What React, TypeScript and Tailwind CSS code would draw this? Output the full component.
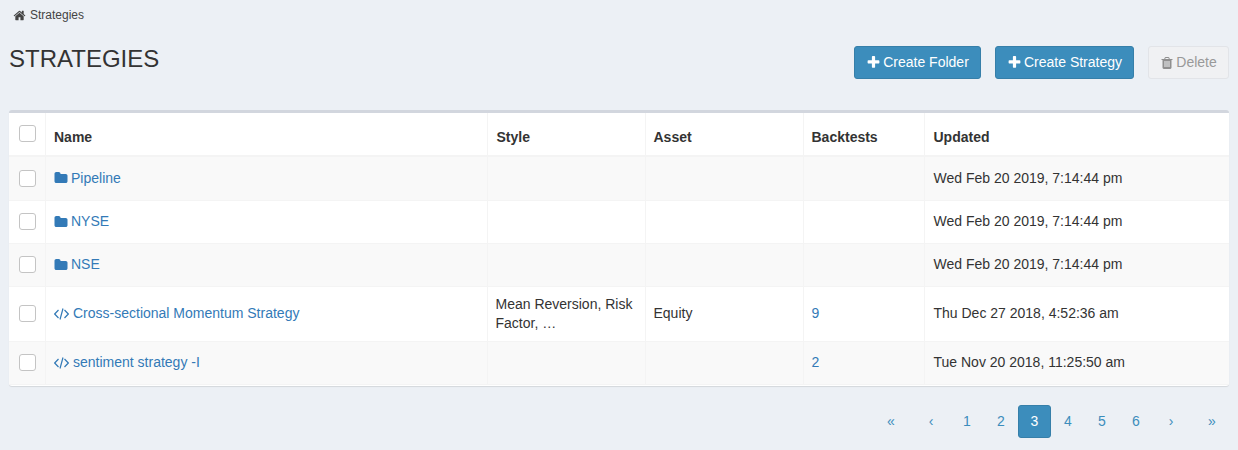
import React from 'react';

const rows = [
  { kind: 'folder', name: 'Pipeline', style: '', asset: '', backtests: '', updated: 'Wed Feb 20 2019, 7:14:44 pm', h: 'h-[44px]' },
  { kind: 'folder', name: 'NYSE', style: '', asset: '', backtests: '', updated: 'Wed Feb 20 2019, 7:14:44 pm', h: 'h-[43px]' },
  { kind: 'folder', name: 'NSE', style: '', asset: '', backtests: '', updated: 'Wed Feb 20 2019, 7:14:44 pm', h: 'h-[43px]' },
  { kind: 'code', name: 'Cross-sectional Momentum Strategy', style: 'Mean Reversion, Risk Factor, …', asset: 'Equity', backtests: '9', updated: 'Thu Dec 27 2018, 4:52:36 am', h: 'h-[55px]' },
  { kind: 'code', name: 'sentiment strategy -I', style: '', asset: '', backtests: '2', updated: 'Tue Nov 20 2018, 11:25:50 am', h: 'h-[43px]' },
];

const pages = [
  { label: '«', w: 'w-[42px]' },
  { label: '‹', w: 'w-[38px]' },
  { label: '1', w: 'w-[34px]' },
  { label: '2', w: 'w-[34px]' },
  { label: '3', w: 'w-[33px]' },
  { label: '4', w: 'w-[34px]' },
  { label: '5', w: 'w-[34px]' },
  { label: '6', w: 'w-[34px]' },
  { label: '›', w: 'w-[36px]' },
  { label: '»', w: 'w-[46px]' },
];

const Glyph = ({ d, className }: { d: string; className: string }) => (
  <svg viewBox="0 0 1792 1792" fill="currentColor" className={className}>
    <path d={d} />
  </svg>
);

const HOME = 'M1472 992v480q0 26-19 45t-45 19h-384v-384h-256v384h-384q-26 0-45-19t-19-45v-480q0-1 .5-3t.5-3l575-474 575 474q1 2 1 6zm223-69l-62 74q-8 9-21 11h-3q-13 0-21-7l-692-577-692 577q-12 8-24 7-13-2-21-11l-62-74q-8-10-7-23.500t11-20.500l719-599q32-26 76-26t76 26l244 204v-195q0-14 9-23t23-9h192q14 0 23 9t9 23v408l219 182q10 8 11 21.500t-7 23.500z';
const PLUS = 'M1600 736v192q0 40-28 68t-68 28h-416v416q0 40-28 68t-68 28h-192q-40 0-68-28t-28-68v-416h-416q-40 0-68-28t-28-68v-192q0-40 28-68t68-28h416v-416q0-40 28-68t68-28h192q40 0 68 28t28 68v416h416q40 0 68 28t28 68z';
const TRASH = 'M704 1376v-704q0-14-9-23t-23-9h-64q-14 0-23 9t-9 23v704q0 14 9 23t23 9h64q14 0 23-9t9-23zm256 0v-704q0-14-9-23t-23-9h-64q-14 0-23 9t-9 23v704q0 14 9 23t23 9h64q14 0 23-9t9-23zm256 0v-704q0-14-9-23t-23-9h-64q-14 0-23 9t-9 23v704q0 14 9 23t23 9h64q14 0 23-9t9-23zm-544-992h448l-48-117q-7-9-17-11h-317q-10 2-17 11zm928 32v64q0 14-9 23t-23 9h-96v948q0 83-47 143.500t-113 60.500h-832q-66 0-113-58.500t-47-141.500v-952h-96q-14 0-23-9t-9-23v-64q0-14 9-23t23-9h309l70-167q15-37 54-63t79-26h320q40 0 79 26t54 63l70 167h309q14 0 23 9t9 23z';
const FOLDER = 'M1728 608v704q0 92-66 158t-158 66h-1216q-92 0-158-66t-66-158v-960q0-92 66-158t158-66h320q92 0 158 66t66 158v32h672q92 0 158 66t66 158z';

const CodeIcon = () => (
  <svg viewBox="0 0 15 12" fill="none" stroke="currentColor" strokeWidth="1.2" className="w-[15px] h-[12px] shrink-0 mr-[1px]">
    <polyline points="4.5,2 0.7,6 4.5,10" />
    <line x1="9" y1="0.5" x2="6" y2="11.5" />
    <polyline points="10.5,2 14.300,6 10.5,10" />
  </svg>
);

const Check = () => (
  <div className="w-[17px] h-[17px] ml-[10px] bg-white border border-[#c4c4c4] rounded-[3px]" />
);

const App: React.FC = () => {
  return (
    <div className="w-[1238px] h-[450px] overflow-hidden bg-[#ecf0f5] text-[#333] text-[14px] font-['Liberation_Sans',Arial,sans-serif]">
      <div className="h-[30px] pl-[13px] flex items-center gap-[4px] text-[12px] text-[#444]">
        <Glyph d={HOME} className="w-[13px] h-[13px]" />
        <span>Strategies</span>
      </div>

      <div className="flex justify-between items-start h-[80px] pl-[9px] pr-[9px]">
        <h1 className="text-[24px] leading-[26px] mt-[16px] text-[#333]">STRATEGIES</h1>
        <div className="flex gap-[14px] mt-[16px]">
          <button className="w-[127px] h-[33px] flex items-center justify-center gap-[2px] bg-[#3c8dbc] border border-[#367fa9] rounded-[3px] text-white">
            <Glyph d={PLUS} className="w-[15px] h-[15px]" /> Create Folder
          </button>
          <button className="w-[139px] h-[33px] flex items-center justify-center gap-[2px] bg-[#3c8dbc] border border-[#367fa9] rounded-[3px] text-white">
            <Glyph d={PLUS} className="w-[15px] h-[15px]" /> Create Strategy
          </button>
          <button className="w-[81px] h-[33px] flex items-center justify-center gap-[2px] bg-[#f0f1f3] border border-[#e2e4e8] rounded-[3px] text-[#999]">
            <Glyph d={TRASH} className="w-[14px] h-[14px] text-[#8f8f8f]" /> Delete
          </button>
        </div>
      </div>

      <div className="mx-[9px] pb-[1px] bg-white border-t-[3px] border-[#d2d6de] rounded-[3px] shadow-[0_1px_1px_rgba(0,0,0,0.1)]">
        <table className="w-[1220px] table-fixed border-collapse">
          <colgroup>
            <col className="w-[36px]" />
            <col className="w-[442px]" />
            <col className="w-[158px]" />
            <col className="w-[158px]" />
            <col className="w-[121px]" />
            <col className="w-[305px]" />
          </colgroup>
          <thead>
            <tr className="h-[43px] border-b-2 border-[#f4f4f4] text-left font-bold">
              <th className="border-r border-[#f4f4f4] pb-[2px]"><Check /></th>
              <th className="border-r border-[#f4f4f4] pl-[8.5px] pt-[6px]">Name</th>
              <th className="border-r border-[#f4f4f4] pl-[9px] pt-[6px]">Style</th>
              <th className="border-r border-[#f4f4f4] pl-[8px] pt-[6px]">Asset</th>
              <th className="border-r border-[#f4f4f4] pl-[8px] pt-[6px]">Backtests</th>
              <th className="pl-[9px] pt-[6px]">Updated</th>
            </tr>
          </thead>
          <tbody>
            {rows.map((r, i) => (
              <tr key={r.name} className={`${r.h} border-b border-[#f4f4f4] ${i % 2 === 0 ? 'bg-[#f9f9f9]' : 'bg-white'}`}>
                <td className="border-r border-[#f4f4f4]"><Check /></td>
                <td className="border-r border-[#f4f4f4] pl-[8px]">
                  <span className="flex items-center gap-[3.5px] text-[#337ab7]">
                    {r.kind === 'folder'
                      ? <Glyph d={FOLDER} className="w-[14px] h-[14px]" />
                      : <CodeIcon />}
                    <span>{r.name}</span>
                  </span>
                </td>
                <td className="border-r border-[#f4f4f4] pl-[8px] pr-[8px] leading-[19px]">{r.style}</td>
                <td className="border-r border-[#f4f4f4] pl-[8px]">{r.asset}</td>
                <td className="border-r border-[#f4f4f4] pl-[8px] text-[#337ab7]">{r.backtests}</td>
                <td className="pl-[9px]">{r.updated}</td>
              </tr>
            ))}
          </tbody>
        </table>
      </div>

      <div className="flex ml-[870px] mt-[19px]">
        {pages.map((p) => (
          <span
            key={p.label}
            className={`${p.w} h-[33px] flex items-center justify-center rounded-[3px] ${
              p.label === '3' ? 'bg-[#3c8dbc] border border-[#367fa9] text-white' : 'text-[#3c8dbc]'
            }`}
          >
            {p.label}
          </span>
        ))}
      </div>
    </div>
  );
};

export default App;
